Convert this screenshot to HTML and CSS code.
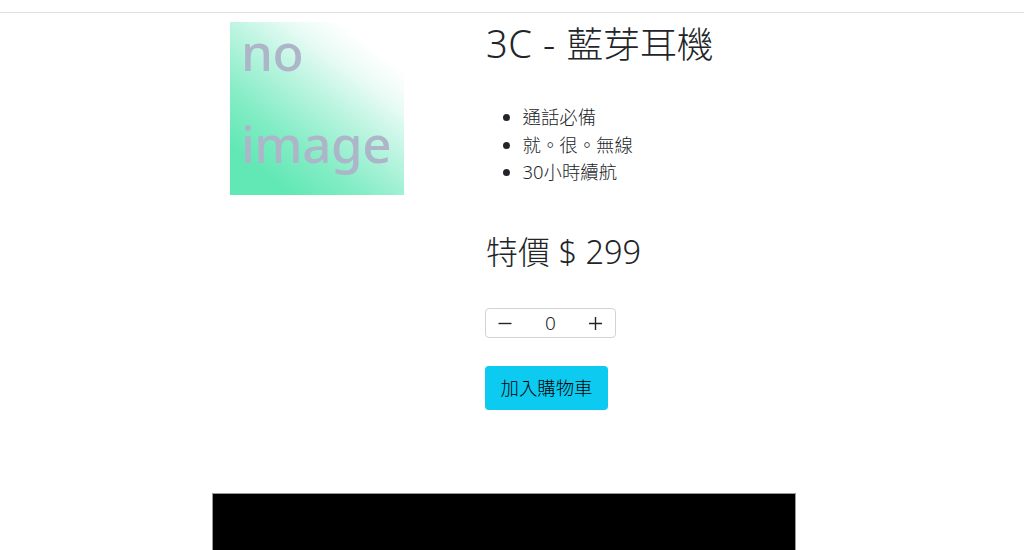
FILE: index.html
```
<!DOCTYPE html>
<html lang="zh-Hant">
<head>
    <meta charset="UTF-8">
    <title>3C - 藍芽耳機</title>
    <link rel="stylesheet" href="styles.css">
</head>
<body>
<header class="navbar"></header>

<main class="container">
    <div class="product">
        <div class="product-image">
            <span class="image-text">no</span>
            <span class="image-text">image</span>
        </div>
        <div class="product-info">
            <h1 class="title"><span class="latin">3C - </span>藍芽耳機</h1>
            <ul class="features">
                <li>通話必備</li>
                <li>就。很。無線</li>
                <li><span class="latin">30</span>小時續航</li>
            </ul>
            <h2 class="price">特價<span class="latin"> $ 299</span></h2>
            <div class="quantity">
                <button type="button" class="quantity-button" id="minus">
                    <svg width="16" height="16" viewBox="0 0 16 16"><path d="M.5 8.5h13" stroke="currentColor" stroke-width="1.4" fill="none"/></svg>
                </button>
                <span class="quantity-value" id="count">0</span>
                <button type="button" class="quantity-button" id="plus">
                    <svg width="16" height="16" viewBox="0 0 16 16"><path d="M2 8.5h13M8.5 2v13" stroke="currentColor" stroke-width="1.4" fill="none"/></svg>
                </button>
            </div>
            <button type="button" class="cart-button">加入購物車</button>
        </div>
    </div>
    <div class="video"></div>
</main>
</body>
</html>
```
FILE: styles.css
```
* {
    margin: 0;
    padding: 0;
    box-sizing: border-box;
}

body {
    height: 550px;
    overflow: hidden;
    background: #fff;
    color: #212529;
    font-family: "Noto Sans CJK TC", sans-serif;
    font-weight: 300;
}

.navbar {
    height: 13px;
    border-bottom: 1px solid #dee2e6;
}

.container {
    width: 584px;
    margin-left: 212px;
}

.product {
    display: flex;
    height: 480px;
    padding: 9px 0 0 18px;
}

.product-image {
    width: 174px;
    height: 173px;
    margin-right: 81px;
    padding-left: 11px;
    background: linear-gradient(38deg, #62e8b5 16%, #85edc6 34%, #b9f4df 54%, #e9fbf5 71%, #fff 84%);
    color: #adb5c9;
    font-family: "Noto Sans", sans-serif;
    font-size: 51px;
    font-weight: 500;
    letter-spacing: -0.4px;
}

.image-text {
    display: block;
    height: 92px;
    line-height: 59px;
}

.latin {
    font-family: "Noto Sans", sans-serif;
    font-weight: 350;
    white-space: pre;
}

.title {
    height: 40px;
    line-height: 40px;
    padding-left: 1px;
    font-size: 36.8px;
    font-weight: 300;
}

.title .latin {
    font-size: 38px;
    letter-spacing: 0.6px;
}

.features {
    margin-top: 41px;
    padding-left: 37.5px;
    font-size: 18.4px;
    line-height: 27.6px;
}

.features li {
    height: 27.6px;
}

.features li::marker {
    font-family: "Open Sans", sans-serif;
}

.price {
    height: 38px;
    margin-top: 45px;
    padding-left: 1px;
    line-height: 38px;
    font-size: 32px;
    font-weight: 300;
}

.price .latin {
    font-size: 32.5px;
}

.quantity {
    display: flex;
    align-items: center;
    justify-content: space-between;
    width: 131px;
    height: 30px;
    margin-top: 39px;
    padding: 0 12px;
    border: 1px solid #ced4da;
    border-radius: 4px;
    font-family: "Noto Sans", sans-serif;
    font-size: 19px;
    font-weight: 350;
}

.quantity-button {
    display: flex;
    border: 0;
    background: none;
    color: #212529;
}

.cart-button {
    width: 123px;
    height: 44px;
    margin-top: 28px;
    padding-bottom: 2px;
    border: 0;
    border-radius: 4px;
    background: #0dcaf0;
    color: #000;
    font-family: inherit;
    font-size: 18.4px;
    font-weight: 300;
}

.video {
    height: 57px;
    background: #000;
    border: 1px solid #999;
    border-bottom: 0;
}
```
